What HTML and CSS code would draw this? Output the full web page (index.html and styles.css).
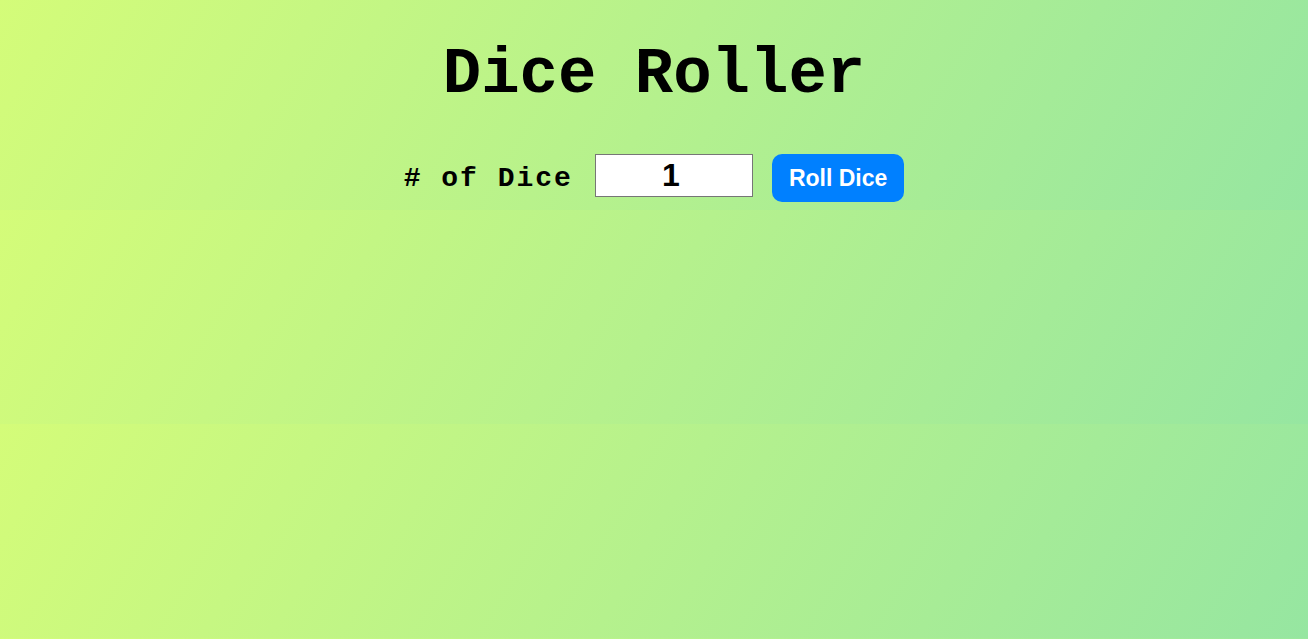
FILE: index.html
```html
<!DOCTYPE html>
<html lang="en">
<head>
<meta charset="utf-8">
<title>Dice Roller</title>
<link rel="stylesheet" href="styles.css">
</head>
<body>
<main class="app">
  <h1 class="title">Dice Roller</h1>
  <div class="controls">
    <label class="label" for="count"># of Dice</label>
    <input class="count" id="count" type="text" inputmode="numeric" value="1">
    <button class="roll" type="button">Roll Dice</button>
  </div>
</main>
</body>
</html>
```
FILE: styles.css
```css
html {
  min-height: 100%;
  background-image: linear-gradient(120deg, #d4fc79 0%, #96e6a1 100%);
  background-size: 100% 214px;
  background-position: 0 -4px;
  background-repeat: repeat;
}
body {
  margin: 0;
}
.app {
  display: flex;
  flex-direction: column;
  align-items: center;
}
.title {
  margin: 39px 0 0;
  font-family: "Courier New", "Liberation Mono", monospace;
  font-weight: bold;
  font-size: 64px;
  line-height: normal;
  color: #000;
}
.controls {
  margin-top: 43px;
  display: flex;
  align-items: baseline;
  justify-content: center;
  gap: 19px;
}
.label {
  margin-right: 3px;
  font-family: "Courier New", "Liberation Mono", monospace;
  font-weight: bold;
  font-size: 28px;
  letter-spacing: 2px;
  color: #000;
}
.count {
  box-sizing: border-box;
  width: 158px;
  height: 43px;
  padding: 0 8px 0 2px;
  margin: 0;
  border: 1px solid #767676;
  background: #fff;
  font: bold 32px "Liberation Sans", sans-serif;
  text-align: center;
  color: #000;
}
.roll {
  margin: 0;
  padding: 11px 17px;
  border: none;
  border-radius: 10px;
  background: #0080ff;
  color: #fff;
  font: bold 23px/26px "Liberation Sans", sans-serif;
  cursor: pointer;
}
```
